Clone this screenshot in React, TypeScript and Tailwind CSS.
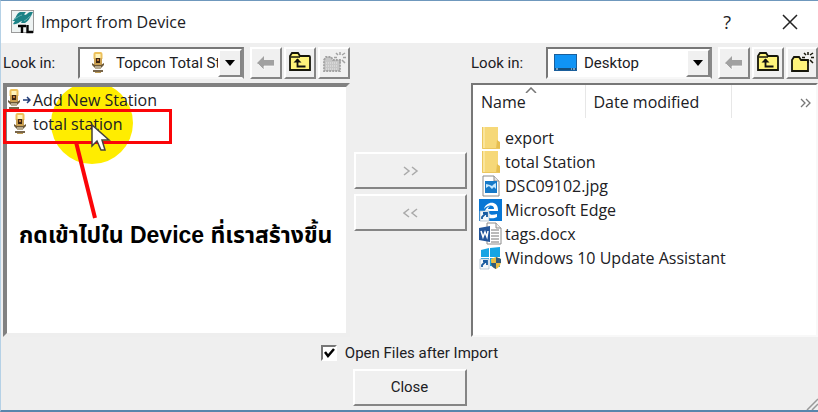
import React from 'react';

const raised = 'border-2 border-t-white border-l-white border-r-[#858585] border-b-[#858585] bg-[#f0f0f0]';

const TopconLogo: React.FC = () => (
  <svg className="h-6 w-6 shrink-0" viewBox="0 0 24 24">
    <rect x="0.5" y="0.5" width="22" height="22" fill="#eef3f3" stroke="#9a9a9a" />
    <path d="M1 11c4-1 4-8 8-9h6c-2 2-2 3-1 3 2 0 3-3 5-3h3c-2 4-4 9-8 11h-4l1-2c-3 1-5 4-9 3l2-3z" fill="#1b8286" />
    <path d="M3 9c3-1 6-4 8-4M13 11c3-1 4-4 7-5" stroke="#69b2b4" fill="none" />
    <path d="M7 16h8M11 16v7M16.500 15v7H22" stroke="#050505" strokeWidth="2.400" fill="none" />
  </svg>
);

const StationIcon: React.FC = () => (
  <svg className="h-[22px] w-3.5 shrink-0" viewBox="0 0 14 22">
    <path d="M3.500 7V2q0-1 1-1h5q1 0 1 1v5" fill="#fff4bd" stroke="#edc15c" strokeWidth="2" />
    <rect x="3" y="6" width="8" height="8" rx="1" fill="#caa052" />
    <path d="M5 6h4v5H5z" fill="#3b2613" />
    <path d="M6 7h2v2H6z" fill="#bd7935" />
    <path d="M1 11l3 2h6l3-2v2l-3 3H4l-3-3z" fill="#6b5838" />
    <path d="M4 14h6v3H4z" fill="#b6aa90" />
    <path d="M2 18h10v2H2z" fill="#79664a" />
    <path d="M4 20h6v1H4z" fill="#bd9b55" />
  </svg>
);

const DesktopIcon: React.FC = () => (
  <svg className="h-[18px] w-6 shrink-0" viewBox="0 0 24 18">
    <rect x="0.500" y="0.500" width="22" height="16" fill="#1094f5" stroke="#1a5f9c" />
    <path d="M1 15h21" stroke="#15507f" strokeWidth="2" />
    <path d="M2 15h2M17 15h1M19 15h2" stroke="#d6ecff" />
  </svg>
);

const BackIcon: React.FC = () => (
  <svg className="h-6 w-6" viewBox="0 0 24 24">
    <path d="M3 12l7-7v4h10v6H10v4z" fill="#a1a1a1" />
    <path d="M4 13l6 6v-4h10" stroke="#fff" fill="none" opacity="0.700" />
  </svg>
);

const UpIcon: React.FC = () => (
  <svg className="h-6 w-6" viewBox="0 0 24 24">
    <path d="M2 5l2-3h6l2 3h9q1 0 1 1v13H2z" fill="#fff47b" stroke="#16160a" strokeWidth="1.800" />
    <path d="M3 6h9" stroke="#16160a" strokeWidth="1.500" />
    <path d="M9.500 8v7.500h8" stroke="#111" strokeWidth="1.800" fill="none" />
    <path d="M5.500 11.500l4-4 4 4z" fill="#111" />
  </svg>
);

const NewFolderIcon: React.FC<{ disabled?: boolean }> = ({ disabled }) => {
  const line = disabled ? '#a2a2a2' : '#16160a';
  return (
    <svg className="h-6 w-6" viewBox="0 0 24 24">
      <path d="M2 9l2-3h5l2 3h7v11H2z" fill={disabled ? '#c6c6c6' : '#fff47b'} stroke={line} strokeWidth="1.800" strokeDasharray={disabled ? '2 1' : undefined} />
      {disabled && <path d="M4 12h12M4 15h12M4 18h12" stroke="#e8e8e8" strokeDasharray="1 1" />}
      <path d="M18 1v3M18 9v3M12 6.500h3M21 6.500h3M14 2l2 2M20 9l3 3M23 2l-3 2" stroke={line} strokeWidth="1.500" />
    </svg>
  );
};

const FolderIcon: React.FC = () => (
  <svg className="h-6 w-6 shrink-0" viewBox="0 0 24 24">
    <path d="M3 1h16v15l2 1v6H3z" fill="#f6d878" />
    <path d="M3 1h3v22H3z" fill="#fae59c" />
    <path d="M18 14l3 2v7h-4z" fill="#e6be50" />
    <path d="M3.500 1v21.500H21" stroke="#ebc65e" fill="none" />
  </svg>
);

const ImageIcon: React.FC = () => (
  <svg className="h-6 w-6 shrink-0" viewBox="0 0 24 24">
    <path d="M4 2h11l5 5v15H4z" fill="#fff" stroke="#8b8b8b" />
    <path d="M15 2v5h5" fill="#e5e5e5" stroke="#8b8b8b" />
    <path d="M6 7h12v12H6z" fill="#1679c8" />
    <path d="M7 10l4 1 2 1 2-2 2-1v6l-2-2-2 2-3-3-3 2z" fill="#c5e8ff" />
  </svg>
);

const Shortcut: React.FC = () => (
  <>
    <path d="M1 13h9v10H1z" fill="#f5f8fb" stroke="#a5b8c8" strokeWidth="0.700" />
    <path d="M3 21v-2l4-4M4 15h4v4" fill="none" stroke="#195ba0" strokeWidth="1.800" />
  </>
);

const EdgeIcon: React.FC = () => (
  <svg className="h-6 w-6 shrink-0" viewBox="0 0 24 24">
    <path d="M0 1h23v22H0z" fill="#0877d5" />
    <path d="M5 11c2-8 14-9 14 1v1H9c1 5 6 4 9 3v3c-5 3-13 1-12-6 1-3 3-4 5-5-1 1-2 2-2 3h6c0-5-7-4-10 0z" fill="#fff" />
    <Shortcut />
  </svg>
);

const WordIcon: React.FC = () => (
  <svg className="h-6 w-6 shrink-0" viewBox="0 0 24 24">
    <path d="M8 1h9l5 5v16H8z" fill="#fff" stroke="#8c8c8c" />
    <path d="M17 1v5h5" fill="#eee" stroke="#8c8c8c" />
    <path d="M12 8h8M12 11h8M12 14h8M12 17h8M12 20h8" stroke="#777" />
    <path d="M0 6l11-2v16L0 18z" fill="#23569b" />
    <path d="M2 9l2 6 2-5 2 5 1-6" fill="none" stroke="#fff" strokeWidth="1.500" />
  </svg>
);

const WindowsIcon: React.FC = () => (
  <svg className="h-6 w-6 shrink-0" viewBox="0 0 24 24">
    <path d="M2 4l8-2v9H2zM11 2l10-1v10H11zM2 12h8v9l-8-2zM11 12h10v9l-10-1z" fill="#16a5e4" />
    <path d="M17 11l5 2c0 5-1 8-5 10-4-2-5-5-5-10z" fill="#e9bd42" />
    <path d="M17 11l5 2v4h-5zM12 17h5v6c-3-1-5-3-5-6z" fill="#345c78" />
    <Shortcut />
  </svg>
);

interface LookInBarProps {
  id: string;
  value: string;
  icon: React.ReactNode;
  canCreate?: boolean;
}

const LookInBar: React.FC<LookInBarProps> = ({ id, value, icon, canCreate }) => {
  const toolButton = `flex h-8 w-8 items-center justify-center ${raised}`;

  return (
    <div className="flex h-8 items-center">
      <label htmlFor={id} className="w-[75px] shrink-0">Look in:</label>
      <div className="relative h-8 min-w-0 flex-1 border-2 border-t-[#777] border-l-[#777] border-r-[#888] border-b-[#f7f7f7] bg-white">
        <select id={id} className="h-full w-full appearance-none bg-transparent pr-6 pl-9 outline-none">
          <option>{value}</option>
        </select>
        <span className="pointer-events-none absolute inset-y-0 left-1.5 flex w-6 items-center justify-center">{icon}</span>
        <span className={`pointer-events-none absolute inset-y-0 right-0 flex w-6 items-center justify-center ${raised}`}>
          <svg className="h-1.5 w-2.5" viewBox="0 0 10 6"><path d="M0 0h10L5 6z" fill="#000" /></svg>
        </span>
      </div>
      <div className="ml-1.5 flex shrink-0 gap-0.5">
        <button type="button" aria-label="Back" disabled className={toolButton}><BackIcon /></button>
        <button type="button" aria-label="Up one level" className={toolButton}><UpIcon /></button>
        <button type="button" aria-label="New folder" disabled={!canCreate} className={toolButton}><NewFolderIcon disabled={!canCreate} /></button>
      </div>
    </div>
  );
};

const files = [
  { name: 'export', icon: <FolderIcon /> },
  { name: 'total Station', icon: <FolderIcon /> },
  { name: 'DSC09102.jpg', icon: <ImageIcon /> },
  { name: 'Microsoft Edge', icon: <EdgeIcon /> },
  { name: 'tags.docx', icon: <WordIcon /> },
  { name: 'Windows 10 Update Assistant', icon: <WindowsIcon /> },
];

// Highlight circle, pointer and the note drawn over the device list
const Callout: React.FC = () => (
  <div className="pointer-events-none absolute inset-0">
    <div className="absolute top-[22px] -left-1 h-[35px] w-[169px] border-[3px] border-[#fb0508]" />
    <svg className="absolute top-[54px] left-[63px] h-20 w-8" viewBox="0 0 32 80">
      <path d="M6 1l19 76" stroke="#fb0508" strokeWidth="4" />
    </svg>
    <svg className="absolute top-[36px] left-[84px] h-8 w-5" viewBox="0 0 20 32">
      <path d="M1 2v21l5-5 4 9h4l-3-10h7z" fill="#fff" stroke="#46423d" strokeWidth="1.500" />
    </svg>
    <p className="absolute top-[129px] left-[12px] font-['Liberation_Sans','Noto_Sans_Thai',sans-serif] text-[23px] leading-[38px] font-bold whitespace-nowrap text-black">
      กดเข้าไปใน Device ที่เราสร้างขึ้น
    </p>
  </div>
);

const DeviceList: React.FC = () => (
  <div className="relative min-h-[253px] flex-1 border-4 border-t-[#818181] border-r-[#eee] border-b-[#eee] border-l-[#818181] bg-white">
    <div className="absolute top-0 left-[44px] h-[77px] w-[82px] overflow-hidden">
      <div className="absolute bottom-0 h-[82px] w-[82px] rounded-full bg-[#ffed00]" />
    </div>
    <ul className="relative font-['Open_Sans',sans-serif] text-base leading-6">
      <li className="flex h-[25px] items-center">
        <StationIcon />
        <svg className="mx-0.5 h-2 w-2" viewBox="0 0 8 8"><path d="M0 4h6M4 1l3 3-3 3" stroke="#223d78" strokeWidth="1.500" fill="none" /></svg>
        Add New Station
      </li>
      <li className="flex h-6 items-center gap-1.5 pl-1.5">
        <StationIcon />
        total station
      </li>
    </ul>
    <Callout />
  </div>
);

const FileList: React.FC = () => (
  <div className="min-h-[253px] flex-1 border-2 border-t-[#777] border-r-[#f8f8f8] border-b-[#f8f8f8] border-l-[#777] bg-white font-['Open_Sans',sans-serif] text-base">
    <table className="w-full table-fixed border-collapse text-left leading-6">
      <thead>
        <tr className="h-[33px]">
          <th className="relative w-[112px] border-r border-[#e7e7e7] pl-2 font-normal">
            Name
            <svg className="absolute top-0.5 left-[52px] h-1.5 w-3" viewBox="0 0 12 6"><path d="M1 6l5-5 5 5" fill="none" stroke="#777" strokeWidth="1.500" /></svg>
          </th>
          <th className="w-[146px] border-r border-[#e7e7e7] pl-2 font-normal">Date modified</th>
          <th className="pr-1 text-right">
            <button type="button" aria-label="More columns">
              <svg className="h-2.5 w-3" viewBox="0 0 12 10"><path d="M1 1l4 4-4 4M6 1l4 4-4 4" fill="none" stroke="#777" strokeWidth="1.300" /></svg>
            </button>
          </th>
        </tr>
      </thead>
      <tbody className="before:block before:h-2">
        {files.map((file) => (
          <tr key={file.name}>
            <td colSpan={3} className="p-0 pl-1.5">
              <div className="flex h-6 items-center gap-0.5">{file.icon}{file.name}</div>
            </td>
          </tr>
        ))}
      </tbody>
    </table>
  </div>
);

export default function App() {
  const transferButton = `h-[37px] w-full ${raised} flex items-center justify-center`;

  return (
    <main className="relative flex min-h-screen flex-col border-t border-b-2 border-l border-t-[#6f98bd] border-b-[#5885ac] border-l-[#b5d1e6] bg-[#efefef] font-['Roboto','Liberation_Sans',sans-serif] text-[15px] text-[#202024]">
      <header className="flex h-[42px] items-center bg-white pr-5 pl-2.5">
        <TopconLogo />
        <h1 className="ml-1.5 flex-1 font-['Open_Sans',sans-serif] text-base">Import from Device</h1>
        <button type="button" aria-label="Help" className="mr-[51px] font-['Open_Sans',sans-serif] text-lg">?</button>
        <button type="button" aria-label="Close window">
          <svg className="h-4 w-4" viewBox="0 0 16 16"><path d="M1 1l14 14M15 1L1 15" stroke="#222" strokeWidth="1.500" /></svg>
        </button>
      </header>

      <div className="flex flex-1 pt-1">
        <section className="flex min-w-0 flex-1 flex-col gap-1 pl-0.5">
          <LookInBar id="device-folder" value="Topcon Total Station" icon={<StationIcon />} />
          <DeviceList />
        </section>
        <div className="flex w-[121px] shrink-0 flex-col gap-[5px] px-1 pt-[105px]">
          <button type="button" aria-label="Copy to computer" disabled className={transferButton}>
            <svg className="h-2.5 w-4" viewBox="0 0 16 10"><path d="M1 1l5 4-5 4M9 1l5 4-5 4" fill="none" stroke="#aaa" strokeWidth="1.500" /></svg>
          </button>
          <button type="button" aria-label="Copy to device" disabled className={transferButton}>
            <svg className="h-2.5 w-4" viewBox="0 0 16 10"><path d="M6 1L1 5l5 4M14 1L9 5l5 4" fill="none" stroke="#aaa" strokeWidth="1.500" /></svg>
          </button>
        </div>
        <section className="flex min-w-0 flex-1 flex-col gap-1">
          <LookInBar id="computer-folder" value="Desktop" icon={<DesktopIcon />} canCreate />
          <FileList />
        </section>
      </div>

      <footer className="flex flex-col items-center pb-1">
        <label className="flex h-8 items-center gap-2">
          <span className="relative flex h-4 w-4">
            <input type="checkbox" defaultChecked className="peer h-4 w-4 appearance-none border-2 border-t-[#777] border-r-white border-b-white border-l-[#777] bg-white" />
            <svg className="pointer-events-none absolute inset-0 hidden peer-checked:block" viewBox="0 0 16 16"><path d="M4 7l3 4 6-7" fill="none" stroke="#000" strokeWidth="2.500" /></svg>
          </span>
          Open Files after Import
        </label>
        <button type="button" className={`h-[37px] w-[114px] ${raised}`}>Close</button>
      </footer>
      <svg className="absolute right-0 bottom-0 h-3 w-3" viewBox="0 0 12 12"><path d="M1 12L12 1M6 12l6-6" stroke="#999" strokeWidth="1.500" /></svg>
    </main>
  );
}
